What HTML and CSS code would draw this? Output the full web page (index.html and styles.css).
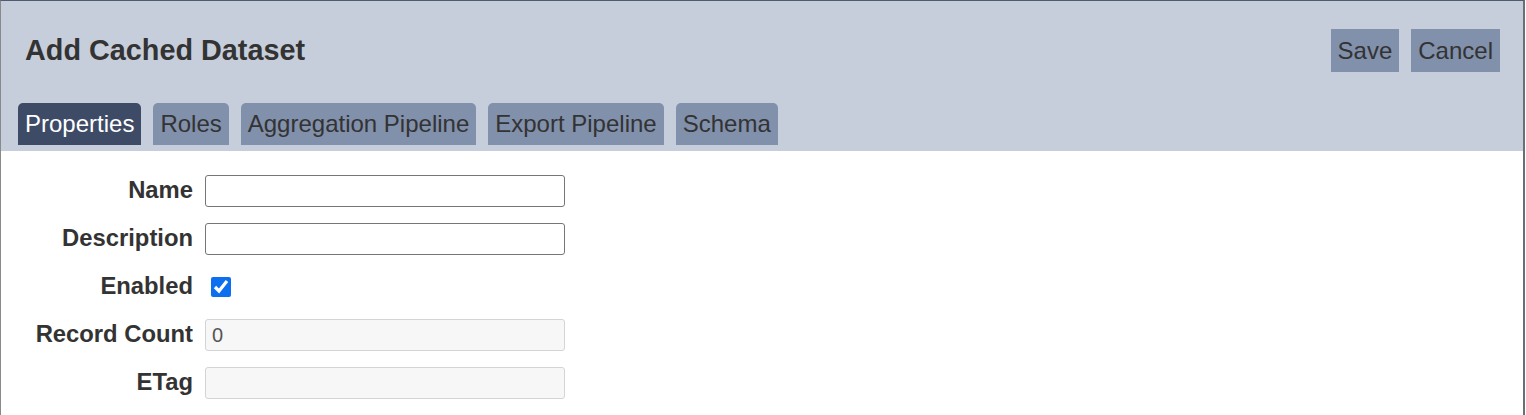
FILE: index.html
```html
<!DOCTYPE html>
<html lang="en">
<head>
  <meta charset="UTF-8" />
  <meta name="viewport" content="width=device-width, initial-scale=1.0" />
  <title>Add Cached Dataset</title>
  <link rel="stylesheet" href="styles.css">
</head>
<body>

  <div class="dialog">
    <!-- Title bar with actions and tabs -->
    <header class="dialog-header">
      <div class="title-row">
        <h1>Add Cached Dataset</h1>
        <div class="actions">
          <button type="button" class="btn">Save</button>
          <button type="button" class="btn">Cancel</button>
        </div>
      </div>
      <nav class="tabs">
        <a href="#" class="tab active">Properties</a>
        <a href="#" class="tab">Roles</a>
        <a href="#" class="tab">Aggregation Pipeline</a>
        <a href="#" class="tab">Export Pipeline</a>
        <a href="#" class="tab">Schema</a>
      </nav>
    </header>

    <!-- Properties form -->
    <form class="props">
      <label for="name">Name</label>
      <input type="text" id="name" />

      <label for="description">Description</label>
      <input type="text" id="description" />

      <label for="enabled">Enabled</label>
      <div class="check-cell">
        <input type="checkbox" id="enabled" checked />
      </div>

      <label for="count">Record Count</label>
      <input type="text" id="count" value="0" disabled />

      <label for="etag">ETag</label>
      <input type="text" id="etag" disabled />
    </form>
  </div>

</body>
</html>
```

FILE: styles.css
```css
body {
  margin: 0;
  padding: 0;
  font-family: "Liberation Sans", Arial, sans-serif;
  color: #333;
  background-color: white;
}
.dialog {
  width: 1522px;
  min-height: 414px;
  border-top: 1px solid #4f5a73;
  border-left: 1px solid #8a8a8a;
  border-right: 2px solid #6b6e75;
}
.dialog-header {
  background-color: #c7cedb;
  padding: 28px 23px 6px 17px;
}
.title-row {
  display: flex;
  justify-content: space-between;
  align-items: center;
  height: 43px;
}
.title-row h1 {
  margin: 0 0 0 7px;
  font-size: 28.8px;
  font-weight: bold;
}
.actions {
  display: flex;
  gap: 12px;
}
.btn {
  height: 43px;
  padding: 0 7px;
  border: none;
  background-color: #8190ab;
  color: #333;
  font-family: inherit;
  font-size: 24px;
  cursor: pointer;
}
.tabs {
  display: flex;
  gap: 12px;
  margin-top: 31px;
}
.tab {
  display: flex;
  align-items: center;
  height: 42px;
  padding: 0 7px;
  border-radius: 5px 5px 0 0;
  background-color: #8190ab;
  color: #333;
  font-size: 24px;
  text-decoration: none;
}
.tab.active {
  background-color: #3e4b66;
  color: white;
}
.props {
  display: grid;
  grid-template-columns: 192px 360px;
  column-gap: 12px;
  row-gap: 16px;
  align-items: center;
  padding-top: 24px;
}
.props label {
  text-align: right;
  font-size: 23.8px;
  font-weight: bold;
  white-space: nowrap;
  padding-bottom: 3px;
}
.props input[type="text"] {
  box-sizing: border-box;
  height: 32px;
  width: 360px;
  margin: 0;
  padding: 4px 6px;
  border: 1px solid #767676;
  border-radius: 3px;
  font-family: inherit;
  font-size: 20px;
  color: #555;
}
.props input[disabled] {
  background-color: #f7f7f7;
  border-color: #d4d4d4;
}
.check-cell {
  height: 32px;
  display: flex;
  align-items: center;
}
.check-cell input {
  width: 20px;
  height: 20px;
  margin: 0 0 0 6px;
  accent-color: #0b6ff0;
}
```
